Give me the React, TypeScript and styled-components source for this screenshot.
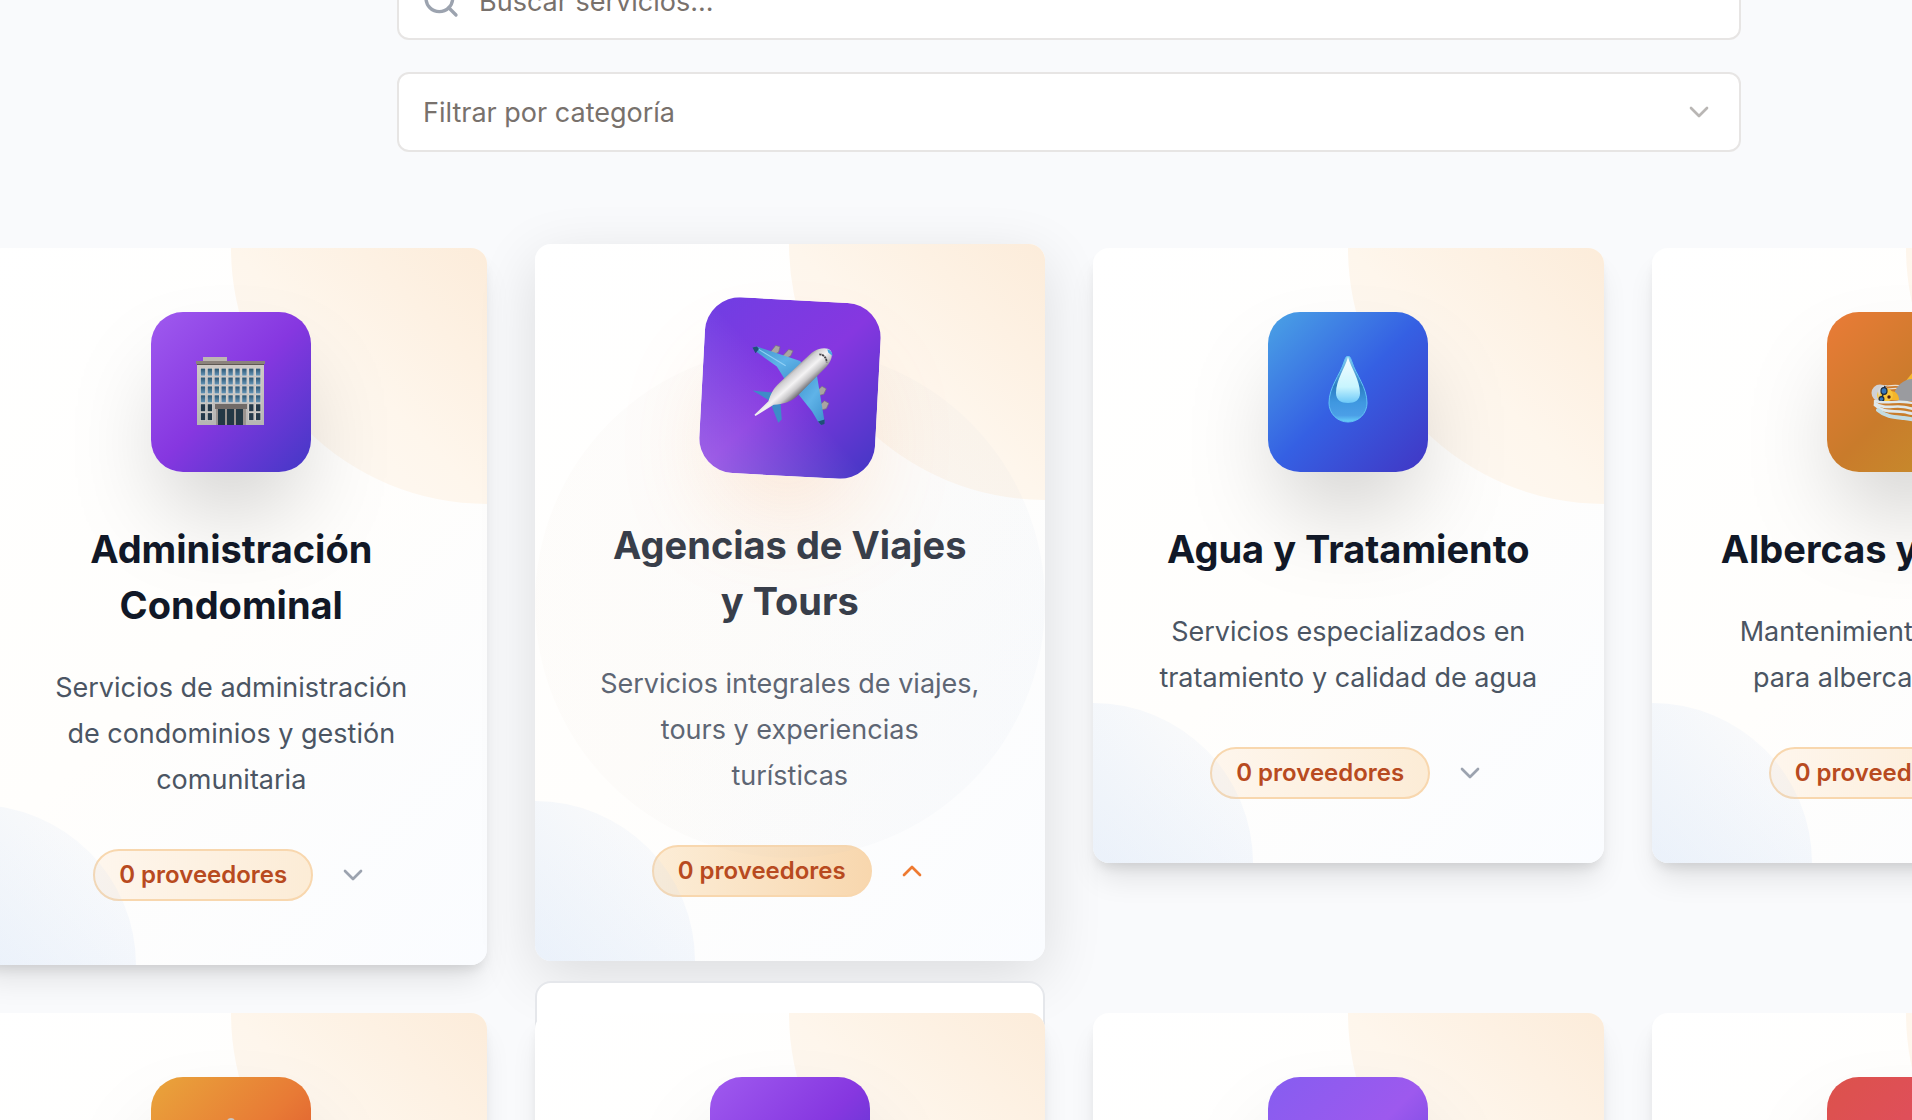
import React, { useState } from "react";
import styled, { createGlobalStyle, css } from "styled-components";
import { ChevronDown, ChevronUp, Search } from "lucide-react";

const GlobalStyle = createGlobalStyle`
  *, *::before, *::after { box-sizing: border-box; }
  body {
    margin: 0;
    background: #f9fafc;
    font-family: Inter, "Liberation Sans", sans-serif;
  }
  h2, p { margin: 0; }
`;

const Viewport = styled.div`
  height: 100vh;
  overflow: hidden;
`;

const Shell = styled.main`
  margin: -40px -250px 0 -24px;
`;

const Filters = styled.form`
  display: flex;
  flex-direction: column;
  gap: 32px;
  max-width: 1344px;
  margin: 0 auto 96px;
`;

const Field = styled.label`
  display: flex;
  align-items: center;
  height: 80px;
  padding: 0 24px;
  background: #fff;
  border: 2px solid #e7e5e4;
  border-radius: 12px;
`;

const SearchField = styled(Field)`
  padding-left: 22px;
  gap: 18px;
`;

const fieldText = css`
  flex: 1;
  min-width: 0;
  padding: 2px 0 0;
  border: 0;
  outline: 0;
  background: transparent;
  font: 400 27px/40px Inter, "Liberation Sans", sans-serif;
  color: #78716c;
`;

const SearchInput = styled.input`
  ${fieldText}
  padding-top: 4px;
  &::placeholder {
    color: #78716c;
    opacity: 1;
  }
`;

const CategorySelect = styled.select`
  ${fieldText}
  appearance: none;
`;

const Grid = styled.section`
  display: grid;
  grid-template-columns: repeat(4, 1fr);
  gap: 48px;
  align-items: start;
`;

const Cell = styled.div`
  position: relative;
`;

const Card = styled.article<{ $open: boolean }>`
  position: relative;
  isolation: isolate;
  display: flex;
  flex-direction: column;
  align-items: center;
  min-height: 480px;
  padding: 64px 60px;
  overflow: hidden;
  border-radius: 16px;
  text-align: center;
  background: linear-gradient(135deg, #ffffff 0%, #fffefc 50%, #fafcff 100%);
  box-shadow: ${(p) =>
    p.$open
      ? "0 16px 60px rgba(0, 0, 0, 0.12)"
      : "0 20px 30px -6px rgba(0, 0, 0, 0.1), 0 8px 12px -4px rgba(0, 0, 0, 0.1)"};
  transform: ${(p) => (p.$open ? "translateY(-4px)" : "none")};
`;

const WarmCorner = styled.span`
  position: absolute;
  top: 0;
  right: 0;
  width: 256px;
  height: 256px;
  border-bottom-left-radius: 100%;
  background: linear-gradient(225deg, #fcecda, #fef6ec 50%, #fefaf5);
`;

const CoolCorner = styled.span`
  position: absolute;
  z-index: 2;
  bottom: 0;
  left: 0;
  width: 160px;
  height: 160px;
  border-top-right-radius: 100%;
  background: linear-gradient(45deg, rgba(188, 212, 245, 0.3), rgba(200, 215, 240, 0.1) 75%);
  pointer-events: none;
`;

const Halo = styled.span`
  position: absolute;
  z-index: 2;
  top: 50%;
  left: 0;
  width: 100%;
  aspect-ratio: 1;
  border-radius: 50%;
  transform: translateY(-50%);
  background: linear-gradient(90deg, rgba(210, 180, 150, 0.03), rgba(140, 170, 210, 0.04));
  pointer-events: none;
`;

const Tile = styled.div<{ $fill: string; $open: boolean }>`
  position: relative;
  z-index: ${(p) => (p.$open ? 3 : 0)};
  display: grid;
  place-items: center;
  flex: none;
  width: 160px;
  height: 160px;
  margin-bottom: 49px;
  border-radius: 32px;
  background: ${(p) =>
    p.$open ? `linear-gradient(45deg, rgba(255, 255, 255, 0.22), transparent 50%), ${p.$fill}` : p.$fill};
  box-shadow: ${(p) =>
    p.$open ? "0 50px 100px -24px rgba(249, 115, 22, 0.2)" : "0 50px 100px -24px rgba(0, 0, 0, 0.25)"};
  transform: ${(p) => (p.$open ? "rotate(3deg) scale(1.1)" : "none")};
  svg { display: block; }
`;

const Title = styled.h2<{ $open: boolean }>`
  position: relative;
  z-index: 4;
  margin-bottom: 32px;
  font-size: 38px;
  line-height: 56px;
  font-weight: 700;
  color: ${(p) => (p.$open ? "#383e4a" : "#111827")};
`;

const Description = styled.p<{ $open: boolean }>`
  position: relative;
  z-index: 4;
  margin-bottom: 46px;
  font-size: 27px;
  line-height: 46px;
  color: ${(p) => (p.$open ? "#5e6674" : "#4b5563")};
`;

const Line = styled.span`
  display: block;
  white-space: nowrap;
`;

const CardFooter = styled.div`
  position: relative;
  display: flex;
  align-items: center;
  gap: 24px;
`;

const Badge = styled.span<{ $open: boolean }>`
  padding: 8px 24px;
  border: 2px solid #f8d7ae;
  border-radius: 26px;
  background: ${(p) =>
    p.$open ? "linear-gradient(90deg, #fcedd7, #f8d7ae)" : "linear-gradient(90deg, #fef6ed, #fcecd6)"};
  font-size: 24px;
  line-height: 32px;
  font-weight: 600;
  color: #b84a20;
  white-space: nowrap;
`;

const Toggle = styled.button<{ $open: boolean }>`
  display: flex;
  padding: 0;
  border: 0;
  background: none;
  color: ${(p) => (p.$open ? "#ee7a31" : "#9ca3af")};
`;

const Panel = styled.div`
  position: absolute;
  top: 100%;
  left: 0;
  right: 0;
  height: 240px;
  margin-top: 16px;
  background: #fff;
  border: 2px solid #e5e7eb;
  border-radius: 16px;
`;

function BuildingIcon() {
  const rows = [0, 1, 2, 3, 4, 5];
  const cols = [0, 1, 2, 3, 4, 5, 6, 7, 8];
  return (
    <svg width="72" height="72" viewBox="0 0 72 72" aria-hidden="true">
      <defs>
        <linearGradient id="wall" x1="0" y1="0" x2="0" y2="1">
          <stop offset="0" stopColor="#cfcac6" />
          <stop offset="1" stopColor="#b6b5b4" />
        </linearGradient>
        <linearGradient id="pane" x1="0" y1="0" x2="0" y2="1">
          <stop offset="0" stopColor="#2c5572" />
          <stop offset="1" stopColor="#6494b6" />
        </linearGradient>
      </defs>
      <rect x="8" y="1" width="24" height="6" fill="#bdb7b2" />
      <rect x="2" y="7" width="67" height="62" fill="url(#wall)" />
      <rect x="1" y="5" width="69" height="3" fill="#8b827c" />
      <rect x="2" y="8" width="67" height="1" fill="#5e5853" />
      {rows.map((r) =>
        cols.map((c) =>
          r > 3 && c > 1 && c < 7 ? null : (
            <g key={`${r}-${c}`}>
              <rect x={5 + c * 6.9} y={12 + r * 8.9} width="6" height="8" fill="#dad6d2" />
              <rect x={5.8 + c * 6.9} y={12.6 + r * 8.9} width="4.4" height="7" fill={r > 3 ? "#24394a" : "url(#pane)"} />
            </g>
          ),
        ),
      )}
      <rect x="21" y="50" width="30" height="19" fill="#99938f" />
      <rect x="20" y="48" width="32" height="5" fill="#716b68" />
      <rect x="23" y="53" width="7" height="16" fill="#233845" />
      <rect x="32" y="53" width="7" height="16" fill="#233845" />
      <rect x="41" y="53" width="7" height="16" fill="#233845" />
    </svg>
  );
}

function PlaneIcon() {
  return (
    <svg width="78" height="78" viewBox="0 0 78 78" aria-hidden="true">
      <defs>
        <linearGradient id="fuselage" gradientUnits="userSpaceOnUse" x1="38" y1="22" x2="54" y2="38">
          <stop offset="0" stopColor="#7d7c80" />
          <stop offset="0.2" stopColor="#cfced0" />
          <stop offset="0.5" stopColor="#f4f3f4" />
          <stop offset="0.75" stopColor="#c9c8ca" />
          <stop offset="1" stopColor="#6f6d72" />
        </linearGradient>
        <linearGradient id="wing" x1="0" y1="0" x2="1" y2="1">
          <stop offset="0" stopColor="#3f93cd" />
          <stop offset="0.5" stopColor="#5fb3e8" />
          <stop offset="1" stopColor="#3b8fcb" />
        </linearGradient>
      </defs>
      <g fill="#a9a5a3" stroke="#77737a" strokeWidth="0.6">
        <path d="M24 1l4 1-1 5-5 3-3-2z" />
        <path d="M36 4l4 1-2 5-5 3-2-3z" />
        <path d="M63 41l5-5 4 2-2 5-6 2z" />
        <path d="M66 54l5-5 4 2-2 5-6 2z" />
      </g>
      <path d="M3 4l4-1 40 11 4 6-16 13-9-13-19-12z" fill="url(#wing)" />
      <path d="M8 5l26 14" stroke="#8fd0f5" strokeWidth="1" />
      <path d="M45 42l14-16 4 1 9 41-3 3-3-3-6-9z" fill="url(#wing)" />
      <path d="M3 4l4-1 2 2-3 4zM66 68l6-2 0 4-3 1z" fill="#1f4f77" />
      <path d="M5 43l18 1-1 8zM23 56l8-4 2 16-3 3z" fill="#3d8cc8" />
      <path
        d="M9 66l-1-1 12-13c2-7 4-12 9-17L57 6c6-5 14-6 17-3 3 4 1 10-3 15L46 46c-6 6-12 8-21 9z"
        fill="url(#fuselage)"
      />
      <path d="M71 2c3 0 5 3 5 6l-4-3z" fill="#4ba9e3" />
      <path d="M64 7c4 0 7 3 7 7" fill="none" stroke="#424147" strokeWidth="1.6" strokeDasharray="2 0.6" />
    </svg>
  );
}

function DropIcon() {
  return (
    <svg width="72" height="72" viewBox="0 0 72 72" aria-hidden="true">
      <defs>
        <linearGradient id="drop" x1="0" y1="0" x2="0" y2="1">
          <stop offset="0" stopColor="#8bd0f0" />
          <stop offset="0.45" stopColor="#2b7dc2" />
          <stop offset="0.7" stopColor="#3f97e0" />
          <stop offset="0.9" stopColor="#4b9fe7" />
          <stop offset="1" stopColor="#68d2fa" />
        </linearGradient>
        <linearGradient id="glint" x1="0" y1="0" x2="0" y2="1">
          <stop offset="0" stopColor="#f6fdff" />
          <stop offset="0.65" stopColor="#c8f5fe" />
          <stop offset="1" stopColor="#6cc8f8" />
        </linearGradient>
      </defs>
      <path
        d="M36 0c2 0 3 3 4 6 4 13 15 25 15 41a19 19 0 0 1-38 0C17 31 28 19 32 6c1-3 2-6 4-6z"
        fill="url(#drop)"
        stroke="#62c4f5"
        strokeWidth="1"
      />
      <path d="M36 1c3 11 12 23 12 36 0 7-5 10-12 10s-12-3-12-10C24 24 33 12 36 1z" fill="url(#glint)" />
    </svg>
  );
}

function SwimmerIcon() {
  return (
    <svg width="76" height="76" viewBox="0 0 76 76" aria-hidden="true">
      <path d="M18 32c7-1 10-1 16 0M19 35c7-1 10-1 14 0" fill="none" stroke="#eadfd2" strokeWidth="1.2" />
      <path d="M36 28L44 18l9 5-13 9z" fill="#f6b92e" />
      <path d="M25 40c2-8 10-15 18-15l26 10v12H29z" fill="#9a9b9f" />
      <path d="M22 37c5 0 8 4 8 9H18z" fill="#f5b52a" />
      <circle cx="11" cy="39" r="8.5" fill="#d0d1d5" />
      <ellipse cx="16" cy="41" rx="8" ry="7" fill="#f9c53a" />
      <path d="M9 37a9 9 0 0 1 9-6l-2 4c-4 1-6 5-6 10z" fill="#d9dadd" />
      <path d="M16 32l-4 16" stroke="#262d35" strokeWidth="1.6" />
      <ellipse cx="15" cy="37" rx="3" ry="3.4" fill="#3476bd" stroke="#1f2b3a" strokeWidth="1.2" />
      <ellipse cx="12.5" cy="45" rx="2.4" ry="2.4" fill="#3476bd" stroke="#1f2b3a" strokeWidth="1.2" />
      <circle cx="20" cy="43" r="1.7" fill="#4f1e10" />
      <g fill="none" stroke="#dfe8ea" strokeLinecap="round">
        <path d="M6 47c9 3 19 0 29 1s22 3 38 3" strokeWidth="2.4" />
        <path d="M6 49c9 7 19 2 29 4s22 5 38 5" strokeWidth="2.6" />
        <path d="M6 51c9 9 19 5 29 7s22 5 38 5" strokeWidth="2.8" />
        <path d="M9 56c8 7 16 7 26 8s20 5 36 5" strokeWidth="4" stroke="#c3dce2" />
      </g>
    </svg>
  );
}

function TowerIcon() {
  return (
    <svg width="78" height="78" viewBox="0 0 78 78" aria-hidden="true">
      <circle cx="39" cy="4" r="4" fill="#c9c5c3" />
      <rect x="36" y="7" width="6" height="64" fill="#aaa5a3" />
    </svg>
  );
}

type Service = {
  id: string;
  fill: string;
  icon?: React.ReactNode;
  title?: string[];
  text?: string[];
};

const services: Service[] = [
  {
    id: "condominios",
    fill: "linear-gradient(135deg, #9f5aef, #8637e0 50%, #4338c6)",
    icon: <BuildingIcon />,
    title: ["Administración", "Condominal"],
    text: ["Servicios de administración", "de condominios y gestión", "comunitaria"],
  },
  {
    id: "viajes",
    fill: "linear-gradient(135deg, #6f3ee3, #8637e0 50%, #4237c4)",
    icon: <PlaneIcon />,
    title: ["Agencias de Viajes", "y Tours"],
    text: ["Servicios integrales de viajes,", "tours y experiencias", "turísticas"],
  },
  {
    id: "agua",
    fill: "linear-gradient(135deg, #4aa3e5, #3560e3 50%, #4136c4)",
    icon: <DropIcon />,
    title: ["Agua y Tratamiento"],
    text: ["Servicios especializados en", "tratamiento y calidad de agua"],
  },
  {
    id: "albercas",
    fill: "linear-gradient(135deg, #ea7b37, #c97b2b 50%, #c5932c)",
    icon: <SwimmerIcon />,
    title: ["Albercas y Jacuzzis"],
    text: ["Mantenimiento y servicios", "para albercas y jacuzzis"],
  },
  { id: "r2-1", fill: "linear-gradient(135deg, #e9a53b, #e87a35 50%, #d8452c)", icon: <TowerIcon /> },
  { id: "r2-2", fill: "linear-gradient(135deg, #9f5aef, #8637e0 50%, #4338c6)" },
  { id: "r2-3", fill: "linear-gradient(135deg, #865df0, #9d59ee 50%, #5b3fd8)" },
  { id: "r2-4", fill: "linear-gradient(135deg, #dc524b, #e04e5e 50%, #d8467a)" },
];

export default function App() {
  const [openId, setOpenId] = useState("viajes");
  return (
    <Viewport>
      <GlobalStyle />
      <Shell>
        <Filters>
          <SearchField>
            <Search size={40} color="#9ca3af" strokeWidth={2} aria-hidden="true" />
            <SearchInput type="text" placeholder="Buscar servicios..." aria-label="Buscar servicios" />
          </SearchField>
          <Field>
            <CategorySelect aria-label="Filtrar por categoría" defaultValue="">
              <option value="">Filtrar por categoría</option>
            </CategorySelect>
            <ChevronDown size={32} color="#b9b6b4" aria-hidden="true" />
          </Field>
        </Filters>
        <Grid>
          {services.map((s) => {
            const open = s.id === openId;
            return (
              <Cell key={s.id}>
                <Card $open={open}>
                  <WarmCorner />
                  <CoolCorner />
                  {open && <Halo />}
                  <Tile $fill={s.fill} $open={open}>
                    {s.icon}
                  </Tile>
                  {s.title && s.text && (
                    <>
                      <Title $open={open}>
                        {s.title.map((line) => (
                          <Line key={line}>{line}</Line>
                        ))}
                      </Title>
                      <Description $open={open}>
                        {s.text.map((line) => (
                          <Line key={line}>{line}</Line>
                        ))}
                      </Description>
                      <CardFooter>
                        <Badge $open={open}>0 proveedores</Badge>
                        <Toggle
                          type="button"
                          $open={open}
                          aria-expanded={open}
                          aria-label="Ver proveedores"
                          onClick={() => setOpenId(open ? "" : s.id)}
                        >
                          {open ? <ChevronUp size={32} /> : <ChevronDown size={32} />}
                        </Toggle>
                      </CardFooter>
                    </>
                  )}
                </Card>
                {open && <Panel />}
              </Cell>
            );
          })}
        </Grid>
      </Shell>
    </Viewport>
  );
}
